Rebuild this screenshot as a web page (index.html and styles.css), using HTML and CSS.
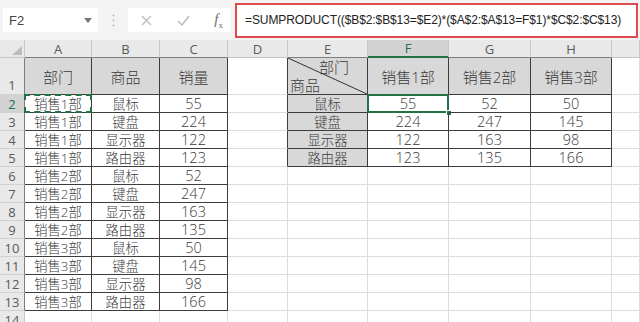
FILE: index.html
```html
<!DOCTYPE html>
<html lang="zh-CN">
<head>
  <meta charset="UTF-8" />
  <title>SUMPRODUCT 交叉汇总</title>
  <link rel="stylesheet" href="styles.css">
</head>
<body>
  <!-- =========  FORMULA BAR  ========= -->
  <div class="bar">
    <div class="namebox">
      <span>F2</span>
      <svg width="8" height="5" viewBox="0 0 8 5"><path d="M0 0h8L4 5z" fill="#777"/></svg>
    </div>
    <div class="grip">
      <svg width="3" height="13" viewBox="0 0 3 13"><circle cx="1.5" cy="1.5" r="1" fill="#b8b8b8"/><circle cx="1.5" cy="6.5" r="1" fill="#b8b8b8"/><circle cx="1.5" cy="11.5" r="1" fill="#b8b8b8"/></svg>
    </div>
    <div class="fbtns">
      <svg width="11" height="11" viewBox="0 0 11 11"><path d="M1 1l9 9M10 1l-9 9" stroke="#bdbdbd" stroke-width="1.4"/></svg>
      <svg width="13" height="11" viewBox="0 0 13 11"><path d="M1 6l4 4 7-9" stroke="#bdbdbd" stroke-width="1.5" fill="none"/></svg>
      <span class="fx">f<sub>x</sub></span>
    </div>
    <div class="formula">=SUMPRODUCT(($B$2:$B$13=$E2)*($A$2:$A$13=F$1)*$C$2:$C$13)</div>
  </div>

  <!-- =========  SHEET  ========= -->
  <div class="sheet" id="sheet"></div>

  <script>
    /* ==========  data  ========== */
    const cols = ['', 'A', 'B', 'C', 'D', 'E', 'F', 'G', 'H', ''];
    const rows = [
      ['部门', '商品', '销量', '', '', '销售1部', '销售2部', '销售3部'],
      ['销售1部', '鼠标', 55, '', '鼠标', 55, 52, 50],
      ['销售1部', '键盘', 224, '', '键盘', 224, 247, 145],
      ['销售1部', '显示器', 122, '', '显示器', 122, 163, 98],
      ['销售1部', '路由器', 123, '', '路由器', 123, 135, 166],
      ['销售2部', '鼠标', 52],
      ['销售2部', '键盘', 247],
      ['销售2部', '显示器', 163],
      ['销售2部', '路由器', 135],
      ['销售3部', '鼠标', 50],
      ['销售3部', '键盘', 145],
      ['销售3部', '显示器', 98],
      ['销售3部', '路由器', 166],
      []
    ];

    const sheet = document.getElementById('sheet');
    const inLeft  = (r, c) => r >= 1 && r <= 13 && c >= 1 && c <= 3;
    const inRight = (r, c) => r >= 1 && r <= 5 && c >= 5 && c <= 8;

    function cell(cls, text) {
      const d = document.createElement('div');
      d.className = cls;
      if (text !== undefined) d.textContent = text;
      sheet.appendChild(d);
      return d;
    }

    /* column header row */
    const corner = cell('corner');
    corner.innerHTML = '<svg width="10" height="9" viewBox="0 0 10 9"><path d="M10 0v9H0z" fill="#bcbcbc"/></svg>';
    cols.slice(1).forEach((name, i) => {
      const c = i + 1;
      let cls = 'colhd';
      if (c === 6) cls += ' on';
      if ((c >= 1 && c <= 3) || (c >= 5 && c <= 8)) cls += ' top';
      cell(cls, name);
    });

    /* body rows */
    rows.forEach((row, i) => {
      const r = i + 1;
      cell('rowhd' + (r === 2 ? ' on' : '') + (r <= 13 ? ' dark' : '') + (r === 1 ? ' tall' : ''), r);
      for (let c = 1; c < cols.length; c++) {
        const v = row[c - 1];
        let cls = 'cell';
        if (inLeft(r, c) || inRight(r, c)) cls += ' t';
        if ((r === 1 && (inLeft(r, c) || inRight(r, c))) || (c === 5 && inRight(r, c))) cls += ' hd';
        if (r === 1) cls += ' big';
        if (c === 4 && r <= 5) cls += ' edge';
        const d = cell(cls, v === undefined || v === '' ? '' : v);
        if (typeof v === 'number') d.classList.add('num');

        if (r === 1 && c === 5) {
          d.classList.add('diag');
          d.innerHTML =
            '<svg class="slash" viewBox="0 0 100 100" preserveAspectRatio="none"><line x1="0" y1="0" x2="100" y2="100" stroke="#333" stroke-width="1" vector-effect="non-scaling-stroke"/></svg>' +
            '<span class="d-top">部门</span><span class="d-bot">商品</span>';
        }
        if (r === 2 && c === 1) d.insertAdjacentHTML('beforeend', '<i class="ants"></i>');
        if (r === 2 && c === 6) d.insertAdjacentHTML('beforeend', '<i class="pick"></i><i class="handle"></i>');
      }
    });
  </script>
</body>
</html>
```

FILE: styles.css
```css
/* --- tokens --- */
:root {
  --green: #217346;
  --grid:  #dcdcdc;
  --ink:   #3a3a3a;
  --line:  #3c3c3c;
  --fill:  #d8d8d8;
  --head:  #e9e9e9;
}

* { box-sizing: border-box; }

body {
  margin: 0;
  height: 322px;
  overflow: hidden;
  background: #fff;
  color: var(--ink);
  font-family: "Open Sans", "Noto Sans CJK SC", sans-serif;
}

/* --- formula bar --- */
.bar {
  display: flex;
  align-items: center;
  height: 40px;
  background: #f3f3f3;
}
.namebox {
  margin-left: 3px;
  width: 95px;
  height: 24px;
  background: #fff;
  display: flex;
  align-items: center;
  justify-content: space-between;
  padding: 0 6px 0 6px;
  font: 13px "Liberation Sans", sans-serif;
  color: #444;
}
.grip {
  width: 30px;
  display: flex;
  justify-content: center;
}
.fbtns {
  width: 103px;
  height: 24px;
  background: #fff;
  display: flex;
  align-items: center;
  justify-content: space-between;
  padding: 0 8px 0 13px;
}
.fx {
  font: italic 15px "Liberation Serif", serif;
  color: #6e6e6e;
}
.fx sub { font-size: 9px; font-style: normal; }
.formula {
  flex: 1;
  height: 35px;
  margin: 0 2px 0 4px;
  border: 2px solid #df4a4f;
  background: #fff;
  display: flex;
  align-items: center;
  padding-left: 8px;
  font-family: "Liberation Sans", sans-serif;
  font-size: 12px;
  letter-spacing: -0.1px;
  color: #222;
  white-space: nowrap;
}

/* --- sheet grid --- */
.sheet {
  display: grid;
  grid-template-columns: 25px 67px 68px 68px 60px 80px 81px 82px 81px 1fr;
  grid-template-rows: 18px 37px repeat(13, 18px);
}
.corner, .colhd, .rowhd {
  background: var(--head);
  color: #5a5a5a;
  font-size: 13px;
  border-right: 1px solid #c9c9c9;
  border-bottom: 1px solid #c4c4c4;
}
.corner { display: flex; align-items: flex-end; justify-content: flex-end; padding: 0 2px 2px 0; }
.colhd { display: flex; align-items: center; justify-content: center; }
.colhd.top { border-bottom-color: #7d7d7d; }
.colhd.on { background: #d3d3d3; color: var(--green); border-bottom: 2px solid var(--green); }
.rowhd {
  display: flex;
  align-items: center;
  justify-content: center;
  border-bottom-color: #d2d2d2;
}
.rowhd.tall { align-items: flex-end; padding-bottom: 0; }
.rowhd.dark { border-right-color: #7d7d7d; }
.rowhd.on { background: #d3d3d3; color: var(--green); }

.cell {
  position: relative;
  display: flex;
  align-items: center;
  justify-content: center;
  font-size: 13.3px;
  font-weight: 300;
  white-space: nowrap;
  border-right: 1px solid var(--grid);
  border-bottom: 1px solid var(--grid);
}
.cell.num { font-size: 14.5px; }
.cell.big { font-size: 15px; }
.cell.t { border-right-color: var(--line); border-bottom-color: var(--line); }
.cell.hd { background: var(--fill); }
.cell.edge { border-right-color: var(--line); }

/* --- slashed corner header --- */
.diag {
  flex-direction: column;
  align-items: stretch;
  justify-content: space-between;
  font-size: 14px;
  padding: 1px 0 0;
}
.slash { position: absolute; left: 0; top: 0; width: 100%; height: 100%; }
.d-top { align-self: flex-end; margin-right: 18px; line-height: 17px; }
.d-bot { align-self: flex-start; margin-left: 2px; line-height: 17px; }

/* --- selection marks --- */
.ants {
  position: absolute;
  left: -1px; top: -1px; right: -1px; bottom: -1px;
  border: 2px dashed var(--green);
}
.pick {
  position: absolute;
  left: -1px; top: -1px; right: -1px; bottom: -1px;
  border: 2px solid var(--green);
}
.handle {
  position: absolute;
  right: -4px; bottom: -4px;
  width: 6px; height: 6px;
  background: var(--green);
  border: 1px solid #fff;
}
```
